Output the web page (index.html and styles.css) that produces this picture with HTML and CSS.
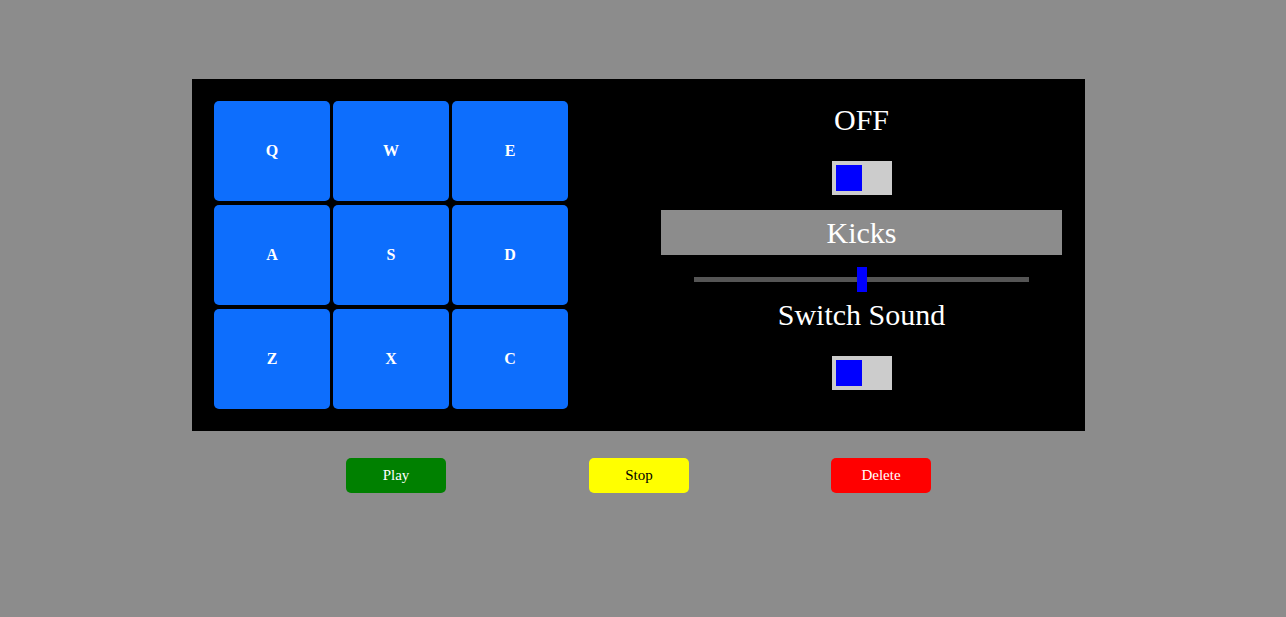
FILE: index.html
```html
<!DOCTYPE html>
<html>
<head>
<meta charset="utf-8">
<link rel="stylesheet" href="styles.css">
</head>
<body>
<div class="page">
  <div class="machine">
    <div class="pads">
      <div class="pad">Q</div>
      <div class="pad">W</div>
      <div class="pad">E</div>
      <div class="pad">A</div>
      <div class="pad">S</div>
      <div class="pad">D</div>
      <div class="pad">Z</div>
      <div class="pad">X</div>
      <div class="pad">C</div>
    </div>
    <div class="controls">
      <div class="label">OFF</div>
      <div class="toggle toggle-first"><div class="knob"></div></div>
      <div class="display">Kicks</div>
      <div class="slider"><div class="track"></div><div class="thumb"></div></div>
      <div class="label label-sound">Switch Sound</div>
      <div class="toggle toggle-second"><div class="knob"></div></div>
    </div>
  </div>
  <div class="actions">
    <button class="btn btn-play">Play</button>
    <button class="btn btn-stop">Stop</button>
    <button class="btn btn-delete">Delete</button>
  </div>
</div>
</body>
</html>
```

FILE: styles.css
```css
html, body {
  margin: 0;
  padding: 0;
  background: #8c8c8c;
  font-family: "Liberation Serif", "DejaVu Serif", serif;
}

.page {
  width: 893px;
  margin-left: 192px;
  padding-top: 79px;
}

.machine {
  background: #000;
  height: 352px;
  box-sizing: border-box;
  padding: 22px 23px 22px 22px;
  display: flex;
  justify-content: space-between;
}

.pads {
  display: grid;
  grid-template-columns: repeat(3, 116px);
  grid-template-rows: repeat(3, 100px);
  column-gap: 3px;
  row-gap: 4px;
}

.pad {
  background: #0d6efd;
  border-radius: 5px;
  color: #fff;
  font-weight: bold;
  font-size: 16px;
  display: flex;
  align-items: center;
  justify-content: center;
}

.controls {
  width: 401px;
  display: flex;
  flex-direction: column;
  align-items: center;
}

.label {
  height: 38px;
  display: flex;
  align-items: center;
  justify-content: center;
  color: #fff;
  font-size: 30px;
}

.label-sound {
  margin-top: 4px;
}

.toggle {
  width: 60px;
  height: 34px;
  background: #ccc;
  box-sizing: border-box;
  padding: 4px;
  margin-top: 22px;
}

.knob {
  width: 26px;
  height: 26px;
  background: #0000ff;
}

.display {
  margin-top: 15px;
  width: 401px;
  height: 45px;
  background: #8c8c8c;
  color: #fff;
  font-size: 30px;
  display: flex;
  align-items: center;
  justify-content: center;
}

.slider {
  margin-top: 12px;
  width: 335px;
  height: 25px;
  display: flex;
  align-items: center;
  justify-content: center;
  position: relative;
}

.track {
  width: 335px;
  height: 5px;
  background: #555;
}

.thumb {
  position: absolute;
  left: 163px;
  top: 0;
  width: 10px;
  height: 25px;
  background: #0000ff;
}

.actions {
  display: flex;
  justify-content: flex-start;
  padding-left: 154px;
  margin-top: 27px;
}

.btn {
  width: 100px;
  height: 35px;
  border: none;
  border-radius: 5px;
  font-family: "Liberation Serif", "DejaVu Serif", serif;
  font-size: 15px;
  padding: 0;
}

.btn-play {
  background: #008000;
  color: #fff;
}

.btn-stop {
  background: #ffff00;
  color: #000;
  margin-left: 143px;
}

.btn-delete {
  background: #ff0000;
  color: #fff;
  margin-left: 142px;
}
```
